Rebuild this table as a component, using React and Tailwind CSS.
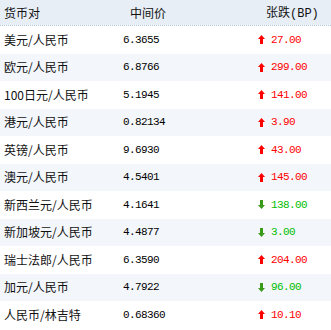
const rows = [
  ["美元/人民币", "6.3655", "up", "27.00"],
  ["欧元/人民币", "6.8766", "up", "299.00"],
  ["100日元/人民币", "5.1945", "up", "141.00"],
  ["港元/人民币", "0.82134", "up", "3.90"],
  ["英镑/人民币", "9.6930", "up", "43.00"],
  ["澳元/人民币", "4.5401", "up", "145.00"],
  ["新西兰元/人民币", "4.1641", "down", "138.00"],
  ["新加坡元/人民币", "4.4877", "down", "3.00"],
  ["瑞士法郎/人民币", "6.3590", "up", "204.00"],
  ["加元/人民币", "4.7922", "down", "96.00"],
  ["人民币/林吉特", "0.68360", "up", "10.10"],
];

const cjk = { fontFamily: '"SimSun","Noto Sans CJK SC",sans-serif' };
const mono = { fontFamily: '"Liberation Mono",monospace' };

function Arrow({ dir }) {
  const color = dir === "up" ? "#ff0000" : "#3a9a1a";
  return (
    <svg width="7" height="9" viewBox="0 0 7 9" className="shrink-0">
      {dir === "up" ? (
        <path d="M3.5 0 L7 4 L5 4 L5 9 L2 9 L2 4 L0 4 Z" fill={color} />
      ) : (
        <path d="M3.5 9 L7 5 L5 5 L5 0 L2 0 L2 5 L0 5 Z" fill={color} />
      )}
    </svg>
  );
}

export default function App() {
  return (
    <div className="w-[331px] h-[330px] overflow-hidden bg-white text-black">
      <div className="flex h-[25px] items-center bg-[#e7eef6] text-[12px] text-[#111]" style={cjk}>
        <div className="w-[119px] pl-[4px]">货币对</div>
        <div className="w-[139px] pl-[11px]">中间价</div>
        <div className="pl-[8px]">
          张跌<span style={mono} className="text-[12px]">(BP)</span>
        </div>
      </div>
      <div className="h-px border-b border-dotted border-[#b8c8dc]" />
      {rows.map(([name, mid, dir, chg], i) => (
        <div
          key={name}
          className={`flex h-[27.5px] items-center ${i % 2 === 1 ? "bg-[#f3f6fa]" : "bg-white"}`}
        >
          <div className="w-[119px] pl-[4px] text-[12px] text-[#111]" style={cjk}>
            {name}
          </div>
          <div className="w-[139px] pl-[4px] text-[11px] tracking-[-0.6px]" style={mono}>
            {mid}
          </div>
          <div className="flex items-center gap-[6px]">
            <Arrow dir={dir} />
            <span
              className={`text-[11px] tracking-[-0.6px] ${dir === "up" ? "text-[#ff0000]" : "text-[#00c000]"}`}
              style={mono}
            >
              {chg}
            </span>
          </div>
        </div>
      ))}
    </div>
  );
}
